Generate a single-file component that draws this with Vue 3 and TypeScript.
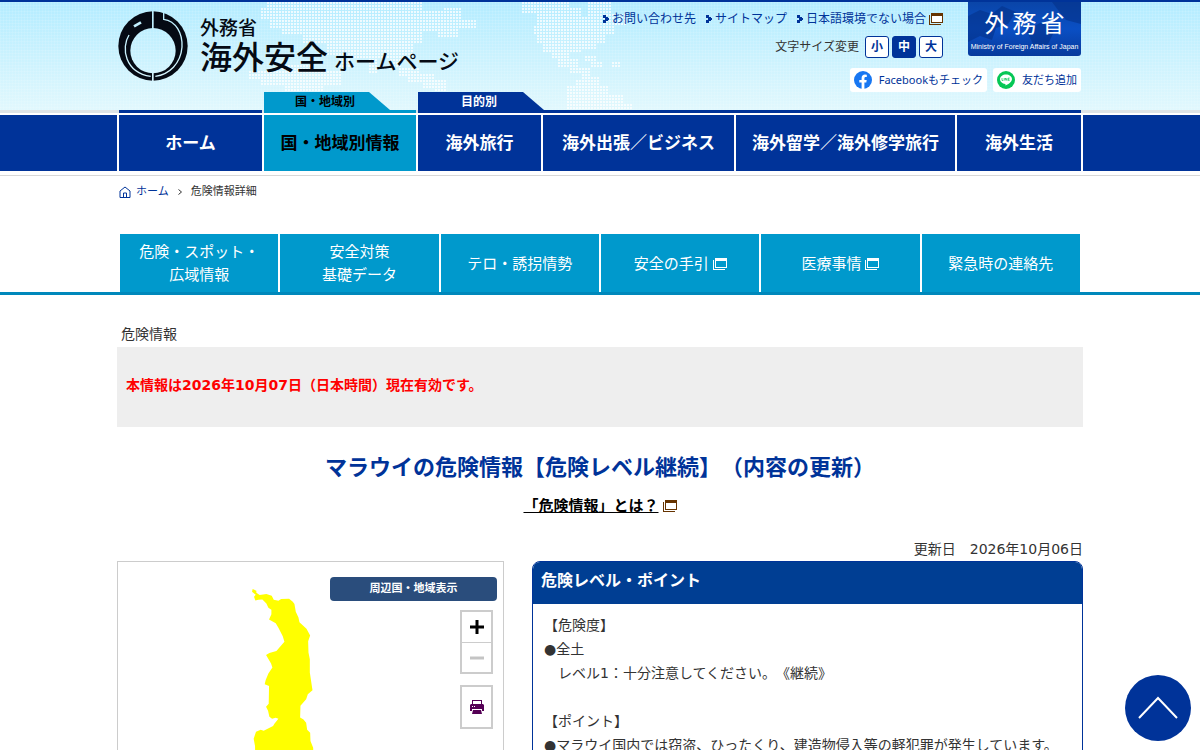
<script setup lang="ts">
import { ref } from 'vue'

interface NavItem {
  label: string
  tab?: string
  active?: boolean
}

interface SubItem {
  lines: string[]
  external?: boolean
}

const utilityLinks: { label: string; external?: boolean }[] = [
  { label: 'お問い合わせ先' },
  { label: 'サイトマップ' },
  { label: '日本語環境でない場合', external: true },
]

const textSizes = ['小', '中', '大']
const textSize = ref('中')

const navItems: NavItem[] = [
  { label: 'ホーム' },
  { label: '国・地域別情報', tab: '国・地域別', active: true },
  { label: '海外旅行', tab: '目的別' },
  { label: '海外出張／ビジネス' },
  { label: '海外留学／海外修学旅行' },
  { label: '海外生活' },
]

const subItems: SubItem[] = [
  { lines: ['危険・スポット・', '広域情報'] },
  { lines: ['安全対策', '基礎データ'] },
  { lines: ['テロ・誘拐情勢'] },
  { lines: ['安全の手引'], external: true },
  { lines: ['医療事情'], external: true },
  { lines: ['緊急時の連絡先'] },
]
</script>

<template>
  <div class="page">
    <header class="header">
      <div class="wrap header-main">
        <svg class="world" viewBox="0 0 966 108" aria-hidden="true">
          <defs>
            <pattern id="dots" width="3" height="3" patternUnits="userSpaceOnUse">
              <rect width="2" height="2" fill="#fff" />
            </pattern>
          </defs>
          <g fill="url(#dots)" opacity="0.75">
            <path d="M150 0H306V9H327V6H345V18H360V27H342V36H321V30H306V42H297V57H285V66H273V57H261V72H252V57H234V66H222V54H210V42H186V33H165V27H153V18H144V6H150Z" />
            <path d="M132 69H165V63H198V69H225V84H207V90H168V84H144V78H132Z" />
            <path d="M282 66H303V72H318V78H330V93H318V87H306V81H291V75H282Z" />
            <path d="M405 0H453V6H465V15H471V0H495V12H510V24H498V33H489V42H480V48H465V51H453V57H462V66H474V75H483V84H474V78H465V72H453V66H441V57H435V51H426V42H420V33H417V24H420V12H405Z" />
            <path d="M450 84H459V78H480V84H492V93H507V102H516V108H450Z" />
            <path d="M468 54H480V60H486V66H474V60H468ZM495 60H504V66H495Z" />
          </g>
        </svg>
        <a class="brand" href="#">
          <svg class="emblem" viewBox="0 0 210 210" aria-hidden="true">
            <mask id="emblem-cut">
              <rect width="210" height="210" fill="#fff" />
              <circle cx="105" cy="119" r="68" fill="#000" />
              <path d="M102 0H107V60H102ZM102 180H107V210H102Z" fill="#000" />
              <path d="M137 0V25C174 30 194 67 192 108C188 158 154 190 112 196" fill="none" stroke="#000" stroke-width="4" />
              <path d="M33 72C9 110 20 184 98 196" fill="none" stroke="#000" stroke-width="4" />
              <path d="M48 46L69 34" stroke="#000" stroke-width="8" />
            </mask>
            <circle cx="105" cy="105" r="104" fill="#050a14" mask="url(#emblem-cut)" />
          </svg>
          <span class="brand-text">
            <span class="brand-ministry">外務省</span>
            <span class="brand-site"><span class="brand-big">海外安全</span><span class="brand-small">ホームページ</span></span>
          </span>
        </a>
        <div class="utility">
          <div class="utility-top">
            <div class="utility-lines">
              <ul class="utility-links">
                <li v-for="link in utilityLinks" :key="link.label">
                  <svg class="marker" viewBox="0 0 6 8" aria-hidden="true">
                    <path d="M0 0H3V2H5V3H6V5H5V6H3V8H0V5H2V3H0Z" />
                  </svg>
                  <a href="#">{{ link.label }}</a>
                  <svg v-if="link.external" class="ext ext-brown" viewBox="0 0 14 12" aria-hidden="true">
                    <rect x="2" y="0" width="12" height="10" fill="#fff" />
                    <path d="M0 2V12H12V11H1V2ZM2 0H14V10H2ZM3 3V9H13V3Z" fill-rule="evenodd" />
                  </svg>
                </li>
              </ul>
              <div class="text-size">
                <span class="text-size-label">文字サイズ変更</span>
                <button
                  v-for="size in textSizes"
                  :key="size"
                  type="button"
                  :class="{ selected: size === textSize }"
                  @click="textSize = size"
                >{{ size }}</button>
              </div>
            </div>
            <a class="mofa" href="#">
              <svg class="mofa-map" viewBox="0 0 113 54" aria-hidden="true">
                <path d="M0 14L12 8L24 12L34 4L48 10L40 22L28 26L24 38L12 34L0 40ZM58 28L74 20L86 30L80 42L66 44ZM84 0H113V22L98 18L90 8Z" />
              </svg>
              <span class="mofa-name"><span>外</span><span>務</span><span>省</span></span>
              <span class="mofa-en">Ministry of Foreign Affairs of Japan</span>
            </a>
          </div>
          <div class="social">
            <a href="#">
              <svg class="social-icon" viewBox="0 0 18 18" aria-hidden="true">
                <circle cx="9" cy="9" r="9" fill="#1877f2" />
                <path d="M7.6 18V11.6H5.3V9H7.6V7C7.6 4.7 9 3.5 11 3.5L12.8 3.7V5.9H11.7C10.7 5.9 10.4 6.5 10.4 7.2V9H12.7L12.3 11.6H10.4V18Z" fill="#fff" />
              </svg>
              Facebookもチェック
            </a>
            <a href="#">
              <svg class="social-icon" viewBox="0 0 18 18" aria-hidden="true">
                <circle cx="9" cy="9" r="9" fill="#06c755" />
                <path d="M9 3.6C5.7 3.6 3 5.7 3 8.3C3 10.7 5.2 12.6 8.2 13C8.7 13.1 8.5 13.8 8.4 14.6C9.5 14.3 15 11.2 15 8.3C15 5.7 12.3 3.6 9 3.6Z" fill="#fff" />
                <path d="M5 7V9.5H6.3M7.2 7V9.5M8.3 9.5V7L9.9 9.5V7M12.6 7H11.3V9.5H12.6M11.3 8.2H12.5" fill="none" stroke="#06c755" stroke-width="0.7" />
              </svg>
              友だち追加
            </a>
          </div>
        </div>
      </div>
      <div class="tabstrip">
        <div class="wrap nav-grid">
          <div
            v-for="item in navItems"
            :key="item.label"
            class="tab-cell"
            :class="{ active: item.active }"
          >
            <span v-if="item.tab" class="tab">{{ item.tab }}</span>
          </div>
        </div>
      </div>
    </header>

    <nav class="nav">
      <div class="wrap nav-grid nav-cells">
        <a
          v-for="item in navItems"
          :key="item.label"
          href="#"
          :class="{ active: item.active }"
        >{{ item.label }}</a>
      </div>
    </nav>

    <div class="below-nav">
      <div class="wrap breadcrumb">
        <svg class="home" viewBox="0 0 12 12" aria-hidden="true">
          <path d="M1 5L6 1L11 5V11.5H1ZM4.5 11V7H7.5V11" fill="none" stroke="currentColor" />
        </svg>
        <a href="#">ホーム</a>
        <svg class="crumb-arrow" viewBox="0 0 4 6" aria-hidden="true">
          <path d="M0.5 0.5L3.5 3L0.5 5.5" fill="none" stroke="#333" />
        </svg>
        <span>危険情報詳細</span>
      </div>
    </div>

    <nav class="subnav">
      <ul>
        <li v-for="item in subItems" :key="item.lines[0]">
          <a href="#">
            <span class="sub-label">
              <span v-for="line in item.lines" :key="line">{{ line }}</span>
            </span>
            <svg v-if="item.external" class="ext ext-white" viewBox="0 0 14 12" aria-hidden="true">
              <path d="M0 2V12H12V11H1V2ZM2 0H14V10H2ZM3 3V9H13V3Z" fill-rule="evenodd" />
            </svg>
          </a>
        </li>
      </ul>
    </nav>

    <main class="wrap main">
      <p class="kind">危険情報</p>
      <p class="notice">本情報は2026年10月07日（日本時間）現在有効です。</p>
      <h1>マラウイの危険情報【危険レベル継続】（内容の更新）</h1>
      <p class="about">
        <a href="#">「危険情報」とは？</a>
        <svg class="ext ext-brown" viewBox="0 0 14 12" aria-hidden="true">
          <path d="M0 2V12H12V11H1V2ZM2 0H14V10H2ZM3 3V9H13V3Z" fill-rule="evenodd" />
        </svg>
      </p>
      <p class="updated">更新日　2026年10月06日</p>

      <div class="columns">
        <section class="map" aria-label="マラウイ">
          <svg class="country" viewBox="0 0 384 248" preserveAspectRatio="xMinYMin meet" aria-hidden="true">
            <g transform="translate(102 -13) scale(0.3333)">
              <path
                d="M97 120L108 125L108 131L118 138L138 135L154 140L160 152L174 155L182 150L206 149L217 158L222 165L226 188L234 205L237 219L258 239L269 259L263 276L264 310L268 330L268 370L276 423L262 435L257 450L240 469L239 504L249 510L257 520L260 541L269 550L270 575L278 595L281 700L106 700L104 590L100 568L107 547L121 541L130 544L158 530L162 523L174 508L166 505L155 508L147 502L143 484L137 472L145 463L146 410L133 405L136 392L144 373L156 355L152 343L137 317L147 311L168 305L192 278L187 261L174 236L166 222L146 211L153 195L153 182L144 176L138 163L126 151L114 152L105 154L101 143L106 137L95 128Z"
                fill="#ff0"
              />
            </g>
          </svg>
          <div class="map-tools">
            <button type="button" class="neighbors">周辺国・地域表示</button>
            <div class="zoom-group">
              <button type="button" aria-label="拡大">
                <svg viewBox="0 0 14 14"><path d="M5.5 0H8.5V5.5H14V8.5H8.5V14H5.500V8.500H0V5.500H5.500Z" fill="#000" /></svg>
              </button>
              <button type="button" aria-label="縮小">
                <svg viewBox="0 0 14 14"><path d="M0 5.500H14V8.500H0Z" fill="#c4c4c4" /></svg>
              </button>
            </div>
            <button type="button" class="print" aria-label="印刷">
              <svg viewBox="0 0 14 14">
                <path d="M2 0H12V4H13L14 5V11H12V9H2V11H0V5L1 4H2ZM3 1V4H11V1ZM2 6V7H3V6ZM4 6V7H5V6ZM3 10H11L12 14H2Z" fill="#505" fill-rule="evenodd" />
              </svg>
            </button>
          </div>
        </section>

        <section class="points">
          <h2>危険レベル・ポイント</h2>
          <div class="points-body">
            <p>【危険度】</p>
            <p>●全土</p>
            <p>　レベル1：十分注意してください。《継続》</p>
            <p class="next">【ポイント】</p>
            <p>●マラウイ国内では窃盗、ひったくり、建造物侵入等の軽犯罪が発生しています。</p>
          </div>
        </section>
      </div>
    </main>

    <a class="to-top" href="#" aria-label="ページの先頭へ">
      <svg viewBox="0 0 40 24"><path d="M1 22L20 2L39 22" fill="none" stroke="#fff" stroke-width="2" /></svg>
    </a>
  </div>
</template>

<style>
body {
  margin: 0;
  background: #fff;
}
</style>

<style scoped>
.page {
  min-height: 100vh;
  font-family: "DejaVu Sans", "Noto Sans CJK JP", sans-serif;
  font-size: 14px;
  line-height: 24px;
  color: #333;
  text-spacing-trim: space-all;
}
.page * {
  box-sizing: border-box;
}
.page p,
.page ul,
.page h1,
.page h2 {
  margin: 0;
  padding: 0;
}
.page ul {
  list-style: none;
}
.page a {
  color: #039;
  text-decoration: none;
}
.page button {
  font-family: inherit;
  padding: 0;
  cursor: pointer;
}
.wrap {
  max-width: 966px;
  margin: 0 auto;
}

.header {
  border-top: 2px solid #039;
  background:
    repeating-linear-gradient(90deg, rgba(255, 255, 255, 0.1) 0 1px, transparent 1px 3px),
    repeating-linear-gradient(rgba(255, 255, 255, 0.1) 0 1px, transparent 1px 3px),
    linear-gradient(#b3ecff, #e2f8fd);
}
.header-main {
  position: relative;
  display: flex;
  justify-content: space-between;
  height: 90px;
  padding: 0 2px 0 1px;
}
.world {
  position: absolute;
  top: 0;
  left: 0;
  width: 100%;
  height: 108px;
}
.brand {
  position: relative;
  display: flex;
  gap: 12px;
  padding-top: 9px;
}
.page .brand {
  color: #050a14;
}
.emblem {
  width: 70px;
  height: 70px;
}
.brand-text {
  display: flex;
  flex-direction: column;
  padding-top: 7px;
  font-weight: 500;
}
.brand-ministry {
  font-size: 19px;
  line-height: 20px;
}
.brand-site {
  display: flex;
  align-items: baseline;
  gap: 6px;
  line-height: 40px;
}
.brand-big {
  font-size: 32px;
}
.brand-small {
  font-size: 21px;
}

.utility {
  position: relative;
  display: flex;
  flex-direction: column;
  align-items: flex-end;
  gap: 12px;
}
.utility-top {
  display: flex;
  align-items: flex-start;
  gap: 25px;
  height: 54px;
}
.utility-lines {
  display: flex;
  flex-direction: column;
  align-items: flex-end;
  gap: 7px;
  padding-top: 7px;
  font-size: 12px;
  line-height: 20px;
}
.utility-links {
  display: flex;
  gap: 10px;
}
.utility-links li {
  display: flex;
  align-items: center;
  gap: 3px;
}
.marker {
  width: 6px;
  height: 8px;
  fill: #039;
}
.ext {
  flex: none;
  width: 14px;
  height: 12px;
}
.ext-brown {
  fill: #630;
}
.ext-white {
  fill: #fff;
}
.text-size {
  display: flex;
  align-items: center;
  gap: 3px;
}
.text-size-label {
  padding-right: 3px;
}
.text-size button {
  width: 24px;
  height: 22px;
  border: 1px solid #039;
  border-radius: 3px;
  background: #fff;
  color: #039;
  font-size: 12px;
  font-weight: 700;
  line-height: 20px;
}
.text-size button.selected {
  background: #039;
  color: #fff;
}
.mofa {
  position: relative;
  display: flex;
  flex-direction: column;
  align-items: center;
  width: 113px;
  height: 54px;
  padding-top: 6px;
  border-radius: 0 0 3px 3px;
  background: linear-gradient(#0a45a8, #0a4fc4 50%, #083a9c);
}
.page .mofa {
  color: #fff;
}
.mofa-map {
  position: absolute;
  inset: 0;
  fill: #04328a;
  opacity: 0.6;
}
.mofa-name {
  position: relative;
  display: flex;
  gap: 4px;
  font-size: 24px;
  line-height: 32px;
}
.mofa-en {
  position: relative;
  font-family: "Liberation Sans", Arial, sans-serif;
  font-size: 7px;
  line-height: 14px;
  white-space: nowrap;
}
.social {
  display: flex;
  gap: 6px;
  font-family: "Noto Sans", "Noto Sans CJK JP", sans-serif;
  font-size: 11px;
  line-height: 22px;
}
.social a {
  display: flex;
  align-items: center;
  gap: 7px;
  height: 24px;
  padding: 0 4px;
  border-radius: 3px;
  background: #fff;
}
.social-icon {
  width: 18px;
  height: 18px;
}

.tabstrip {
  position: relative;
  background: linear-gradient(transparent 18px, #dde3e6 18px);
}
.nav-grid {
  display: grid;
  grid-template-columns: 143fr 152fr 123fr 191fr 219fr 124fr;
  gap: 2px;
  padding: 0 2px;
}
.tab-cell {
  min-width: 0;
  height: 21px;
  border-bottom: 3px solid #039;
  color: #fff;
}
.tab-cell:nth-child(n + 4) {
  margin-left: -2px;
}
.tab-cell.active {
  border-color: #09c;
  color: #000;
}
.tab {
  position: relative;
  display: block;
  width: 126px;
  height: 18px;
  padding-right: 4px;
  clip-path: polygon(0 0, 105px 0, 126px 18px, 0 18px);
  background: #039;
  font-size: 12px;
  font-weight: 700;
  line-height: 20px;
  text-align: center;
}
.active .tab {
  background: #09c;
}

.nav {
  margin-top: 2px;
  background: #039;
}
.nav-cells {
  background: #fff;
}
.nav-cells a {
  display: flex;
  align-items: center;
  justify-content: center;
  height: 56px;
  background: #039;
  font-size: 17px;
  font-weight: 700;
}
.page .nav-cells a {
  color: #fff;
}
.page .nav-cells a.active {
  background: #09c;
  color: #000;
}

.below-nav {
  margin-top: 4px;
  border-top: 1px solid #d8d8d8;
}
.breadcrumb {
  display: flex;
  align-items: center;
  padding: 4px 2px;
  font-size: 11px;
}
.home {
  width: 12px;
  height: 12px;
  margin-right: 5px;
  color: #039;
}
.crumb-arrow {
  width: 4px;
  height: 6px;
  margin: 0 9px;
}

.subnav {
  margin-top: 26px;
  border-bottom: 3px solid #08b;
}
.subnav ul {
  display: flex;
  gap: 2px;
  max-width: 960px;
  margin: 0 auto;
}
.subnav li {
  flex: 1;
}
.subnav a {
  display: flex;
  align-items: center;
  justify-content: center;
  gap: 4px;
  height: 58px;
  padding-top: 2px;
  background: #09c;
  font-size: 15px;
  line-height: 23px;
}
.page .subnav a {
  color: #fff;
}
.sub-label {
  display: flex;
  flex-direction: column;
  align-items: center;
}

.main {
  padding-bottom: 40px;
}
.page .kind {
  padding: 27px 4px 1px;
}
.page .notice {
  padding: 26px 9px 30px;
  background: #eee;
  color: #f00;
  font-weight: 700;
}
.page h1 {
  margin-top: 25px;
  color: #039;
  font-size: 22px;
  font-weight: 700;
  line-height: 32px;
  text-align: center;
}
.about {
  display: flex;
  align-items: center;
  justify-content: center;
  gap: 4px;
  font-size: 15px;
  font-weight: 700;
}
.page .about {
  margin-top: 10px;
}
.page .about a {
  color: #000;
  text-decoration: underline;
}
.page .updated {
  margin-top: 19px;
  text-align: right;
}

.columns {
  display: grid;
  grid-template-columns: 387fr 551fr;
  gap: 28px;
}
.map {
  position: relative;
  overflow: hidden;
  border: 1px solid #ccc;
}
.country {
  position: absolute;
  top: 0;
  left: 0;
  width: 100%;
}
.map-tools {
  position: relative;
  display: flex;
  flex-direction: column;
  align-items: flex-end;
  padding: 15px 10px 20px;
}
.neighbors {
  width: 167px;
  height: 24px;
  margin-right: -4px;
  border: 0;
  border-radius: 4px;
  background: #2a4d7c;
  color: #fff;
  font-size: 11px;
  font-weight: 700;
  line-height: 22px;
}
.zoom-group {
  display: flex;
  flex-direction: column;
  width: 33px;
  margin-top: 9px;
  border: 2px solid #ccc;
}
.zoom-group button,
.print {
  display: flex;
  align-items: center;
  justify-content: center;
  height: 30px;
  border: 0;
  background: #fff;
}
.zoom-group button + button {
  border-top: 1px solid #ccc;
}
.map-tools svg {
  width: 14px;
  height: 14px;
}
.print {
  width: 33px;
  height: 44px;
  margin-top: 11px;
  border: 2px solid #ccc;
}

.points {
  border: 1px solid #039;
  border-radius: 8px 8px 0 0;
  overflow: hidden;
}
.page .points h2 {
  padding: 7px 8px 11px;
  background: #003e93;
  color: #fff;
  font-size: 16px;
  line-height: 24px;
}
.points-body {
  padding: 9px 11px 30px;
}
.page .points-body .next {
  margin-top: 24px;
}

.to-top {
  position: fixed;
  right: 9px;
  bottom: 9px;
  display: flex;
  align-items: center;
  justify-content: center;
  width: 66px;
  height: 66px;
  border-radius: 50%;
  background: #039;
}
.to-top svg {
  width: 40px;
  height: 24px;
}
</style>
